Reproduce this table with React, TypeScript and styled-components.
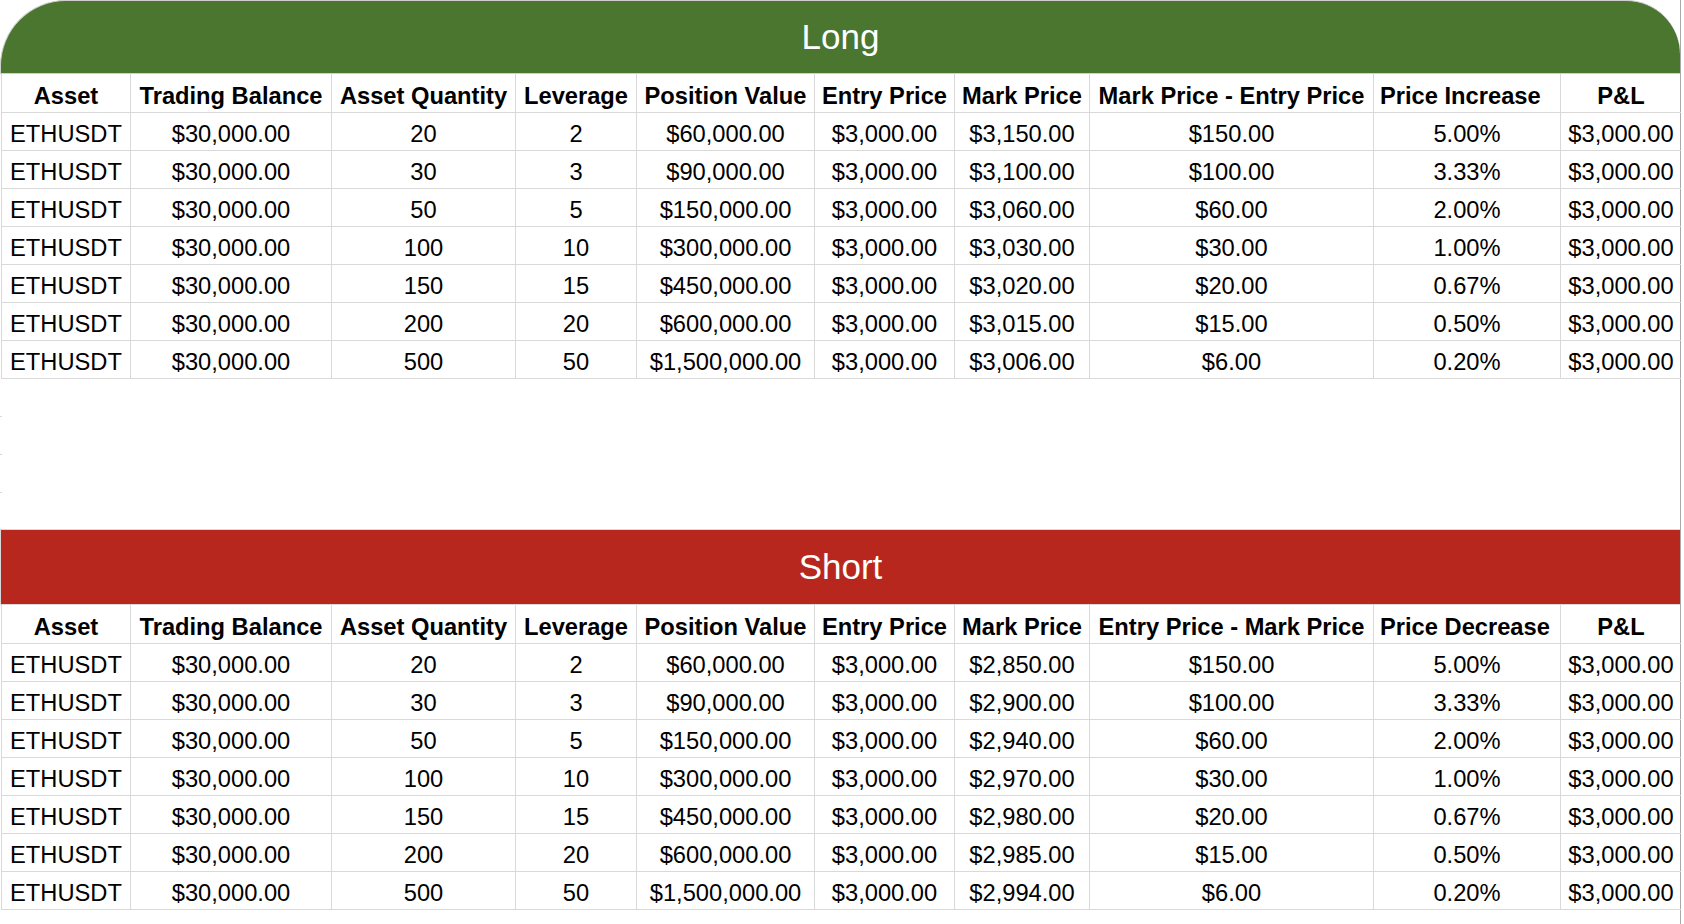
import React from "react";
import styled, { createGlobalStyle } from "styled-components";

const GlobalStyle = createGlobalStyle`
  html, body {
    margin: 0;
    padding: 0;
    background: #ffffff;
  }
  body {
    font-family: "Liberation Sans", Arial, sans-serif;
    color: #000000;
  }
`;

const GRID_LINE = "#d9d9d9";

const Sheet = styled.div`
  width: 1681px;
  min-height: 924px;
  box-sizing: border-box;
  border-right: 1px solid #a9a9a9;
  display: flex;
  flex-direction: column;
`;

const Section = styled.section`
  display: flex;
  flex-direction: column;
`;

interface BannerProps {
  $tone: "long" | "short";
}

const Banner = styled.div<BannerProps>`
  height: ${(p) => (p.$tone === "long" ? "74px" : "76px")};
  box-sizing: border-box;
  display: flex;
  align-items: center;
  justify-content: center;
  background: ${(p) => (p.$tone === "long" ? "#4a762f" : "#b8271d")};
  border: 1px solid ${(p) => (p.$tone === "long" ? "#cfcfcf" : GRID_LINE)};
  border-right: none;
  border-radius: ${(p) => (p.$tone === "long" ? "66px 54px 0 0" : "0")};
  color: #ffffff;
  font-size: 35px;
  font-weight: 400;
`;

const Grid = styled.div`
  display: grid;
  grid-template-columns: 129px 201px 184px 121px 178px 140px 135px 284px 187px 120px;
  border-left: 1px solid ${GRID_LINE};
  margin-left: 1px;
`;

interface CellProps {
  $head?: boolean;
  $last?: boolean;
  $left?: boolean;
}

const Cell = styled.div<CellProps>`
  height: ${(p) => (p.$head ? "39px" : "38px")};
  box-sizing: border-box;
  padding-top: ${(p) => (p.$head ? "6px" : "5px")};
  padding-left: ${(p) => (p.$left ? "6px" : "0")};
  display: flex;
  align-items: center;
  justify-content: ${(p) => (p.$left ? "flex-start" : "center")};
  white-space: nowrap;
  border-bottom: 1px solid ${GRID_LINE};
  border-right: ${(p) => (p.$last ? "none" : `1px solid ${GRID_LINE}`)};
  font-size: 23.7px;
  font-weight: ${(p) => (p.$head ? 700 : 400)};
`;

const Gap = styled.div`
  height: 150px;
  display: flex;
  flex-direction: column;
`;

const TickRow = styled.div`
  height: 38px;
  box-sizing: border-box;
  position: relative;
  &::after {
    content: "";
    position: absolute;
    left: 0;
    bottom: 0;
    width: 2px;
    height: 1px;
    background: ${GRID_LINE};
  }
`;

type Row = [string, string, string, string, string, string, string, string, string, string];

const longHeaders = [
  "Asset",
  "Trading Balance",
  "Asset Quantity",
  "Leverage",
  "Position Value",
  "Entry Price",
  "Mark Price",
  "Mark Price - Entry Price",
  "Price Increase",
  "P&L",
];

const shortHeaders = [
  "Asset",
  "Trading Balance",
  "Asset Quantity",
  "Leverage",
  "Position Value",
  "Entry Price",
  "Mark Price",
  "Entry Price - Mark Price",
  "Price Decrease",
  "P&L",
];

// the "Price Increase / Decrease" heading sits flush left in the sheet
const LEFT_HEAD = 8;

const base = [
  { qty: "20", lev: "2", pos: "$60,000.00", diff: "$150.00", pct: "5.00%", up: "$3,150.00", down: "$2,850.00" },
  { qty: "30", lev: "3", pos: "$90,000.00", diff: "$100.00", pct: "3.33%", up: "$3,100.00", down: "$2,900.00" },
  { qty: "50", lev: "5", pos: "$150,000.00", diff: "$60.00", pct: "2.00%", up: "$3,060.00", down: "$2,940.00" },
  { qty: "100", lev: "10", pos: "$300,000.00", diff: "$30.00", pct: "1.00%", up: "$3,030.00", down: "$2,970.00" },
  { qty: "150", lev: "15", pos: "$450,000.00", diff: "$20.00", pct: "0.67%", up: "$3,020.00", down: "$2,980.00" },
  { qty: "200", lev: "20", pos: "$600,000.00", diff: "$15.00", pct: "0.50%", up: "$3,015.00", down: "$2,985.00" },
  { qty: "500", lev: "50", pos: "$1,500,000.00", diff: "$6.00", pct: "0.20%", up: "$3,006.00", down: "$2,994.00" },
];

const buildRows = (side: "long" | "short"): Row[] =>
  base.map((b) => [
    "ETHUSDT",
    "$30,000.00",
    b.qty,
    b.lev,
    b.pos,
    "$3,000.00",
    side === "long" ? b.up : b.down,
    b.diff,
    b.pct,
    "$3,000.00",
  ]);

interface TableProps {
  title: string;
  tone: "long" | "short";
  headers: string[];
  rows: Row[];
}

const PositionTable: React.FC<TableProps> = ({ title, tone, headers, rows }) => {
  return (
    <Section>
      <Banner $tone={tone}>{title}</Banner>
      <Grid>
        {headers.map((h, i) => (
          <Cell key={h} $head $left={i === LEFT_HEAD} $last={i === headers.length - 1}>
            {h}
          </Cell>
        ))}
        {rows.map((row, r) =>
          row.map((v, c) => (
            <Cell key={`${r}-${c}`} $last={c === row.length - 1}>
              {v}
            </Cell>
          ))
        )}
      </Grid>
    </Section>
  );
};

const App: React.FC = () => {
  return (
    <>
      <GlobalStyle />
      <Sheet>
        <PositionTable title="Long" tone="long" headers={longHeaders} rows={buildRows("long")} />
        <Gap>
          <TickRow />
          <TickRow />
          <TickRow />
        </Gap>
        <PositionTable title="Short" tone="short" headers={shortHeaders} rows={buildRows("short")} />
      </Sheet>
    </>
  );
};

export default App;
